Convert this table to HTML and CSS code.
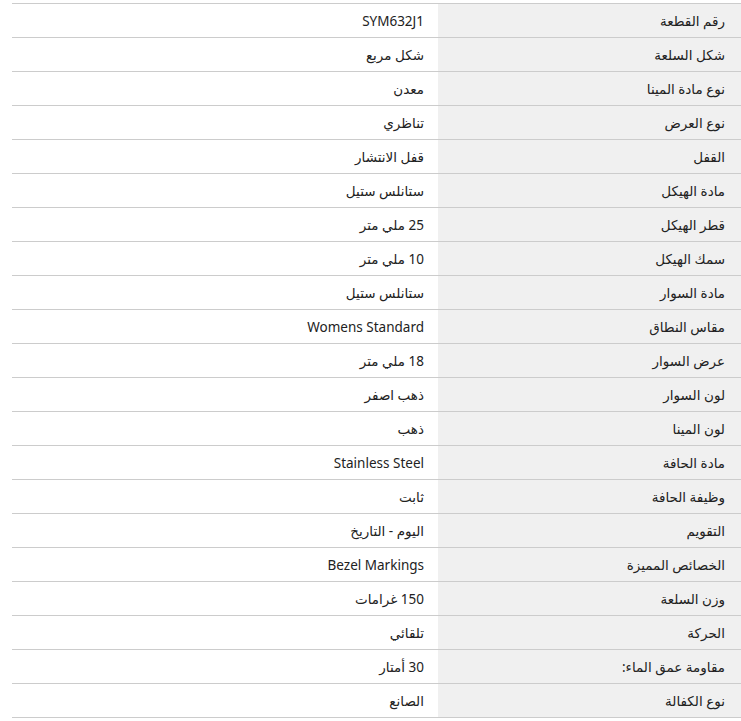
FILE: index.html
```html
<!DOCTYPE html>
<html lang="ar" dir="rtl">
<head>
<meta charset="utf-8">
<link rel="stylesheet" href="styles.css">
</head>
<body>
<table class="specs">
<tbody>
<tr><th>رقم القطعة</th><td>SYM632J1</td></tr>
<tr><th>شكل السلعة</th><td>شكل مربع</td></tr>
<tr><th>نوع مادة المينا</th><td>معدن</td></tr>
<tr><th>نوع العرض</th><td>تناظري</td></tr>
<tr><th>القفل</th><td>قفل الانتشار</td></tr>
<tr><th>مادة الهيكل</th><td>ستانلس ستيل</td></tr>
<tr><th>قطر الهيكل</th><td>25 ملي متر</td></tr>
<tr><th>سمك الهيكل</th><td>10 ملي متر</td></tr>
<tr><th>مادة السوار</th><td>ستانلس ستيل</td></tr>
<tr><th>مقاس النطاق</th><td>Womens Standard</td></tr>
<tr><th>عرض السوار</th><td>18 ملي متر</td></tr>
<tr><th>لون السوار</th><td>ذهب اصفر</td></tr>
<tr><th>لون المينا</th><td>ذهب</td></tr>
<tr><th>مادة الحافة</th><td>Stainless Steel</td></tr>
<tr><th>وظيفة الحافة</th><td>ثابت</td></tr>
<tr><th>التقويم</th><td>اليوم - التاريخ</td></tr>
<tr><th>الخصائص المميزة</th><td>Bezel Markings</td></tr>
<tr><th>وزن السلعة</th><td>150 غرامات</td></tr>
<tr><th>الحركة</th><td>تلقائي</td></tr>
<tr><th>مقاومة عمق الماء:</th><td>30 أمتار</td></tr>
<tr><th>نوع الكفالة</th><td>الصانع</td></tr>
</tbody>
</table>
</body>
</html>
```
FILE: styles.css
```css
html, body {
  margin: 0;
  padding: 0;
  background: #fff;
  overflow: hidden;
}
body {
  font-family: "Noto Sans", "DejaVu Sans", sans-serif;
  font-size: 13.5px;
  color: #222;
}
.specs {
  margin: 3px 0 0 0;
  width: 729px;
  border-collapse: collapse;
  table-layout: fixed;
}
.specs th, .specs td {
  height: 33px;
  padding: 0 14px;
  border-top: 1px solid #cccccc;
  border-bottom: 1px solid #cccccc;
  text-align: right;
  font-weight: normal;
  vertical-align: middle;
  line-height: 20px;
}
.specs th {
  width: 273px;
  background: #f0f0f0;
  padding-right: 16px;
}
```
